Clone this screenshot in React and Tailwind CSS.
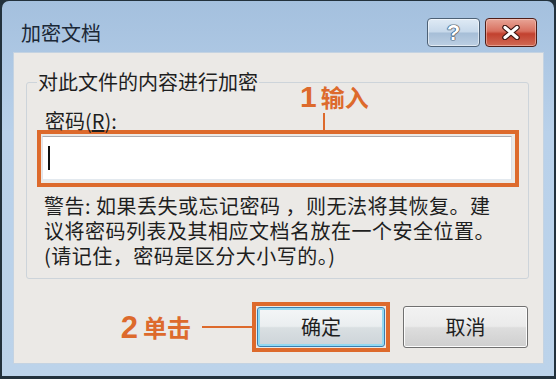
import React from 'react';

const ORANGE = '#dd6a2c';

function CaptionButtons() {
  return (
    <div className="flex items-center gap-[5px] mr-[7px]">
      {/* help */}
      <div className="w-[53px] h-[29px] rounded-[4px] border border-[#4d6176] bg-[linear-gradient(180deg,#dfeaf5_0%,#c6d8ea_48%,#a6bed7_52%,#bccfe3_100%)] shadow-[inset_0_0_0_1px_rgba(255,255,255,0.55)] flex items-center justify-center">
        <span className="text-[22px] font-bold leading-none text-white font-['Liberation_Sans',sans-serif] [text-shadow:0_0_1px_#25384c,0_0_1px_#25384c,0_0_1px_#25384c,0_0_1px_#25384c]">?</span>
      </div>
      {/* close */}
      <div className="w-[52px] h-[29px] rounded-[4px] border border-[#4f1e18] bg-[linear-gradient(180deg,#e8a597_0%,#d8705f_45%,#c2412f_55%,#d06a55_100%)] shadow-[inset_0_0_0_1px_rgba(255,220,210,0.45)] flex items-center justify-center">
        <svg width="22" height="15" viewBox="0 0 22 15">
          <path d="M5 2.5 L17 12.5 M17 2.5 L5 12.5" stroke="#3a1410" strokeWidth="5.5" strokeLinecap="round" />
          <path d="M5 2.5 L17 12.5 M17 2.5 L5 12.5" stroke="#ffffff" strokeWidth="3.2" strokeLinecap="round" />
        </svg>
      </div>
    </div>
  );
}

function WinButton({ children, focused, className = '' }) {
  return (
    <div
      className={`rounded-[3px] border flex items-center justify-center text-[20px] text-[#1e1e1e] ${
        focused
          ? 'border-[#3b7eb0] bg-[linear-gradient(180deg,#f4f6f7_0%,#eaeef0_48%,#d9dfe2_52%,#cdd4d8_100%)] shadow-[inset_0_0_0_2px_#93d9f1]'
          : 'border-[#707070] bg-[linear-gradient(180deg,#f2f2f2_0%,#ebebeb_48%,#dddddd_52%,#cfcfcf_100%)] shadow-[inset_0_0_0_1px_#fcfcfc]'
      } ${className}`}
    >
      {children}
    </div>
  );
}

export default function App() {
  return (
    <div className="w-[556px] h-[379px] bg-[#22313c] pt-[1px] px-[2px] pb-[3px] font-['Noto_Sans_CJK_SC','Noto_Sans',sans-serif]">
      <div className="h-full rounded-t-[7px] bg-[linear-gradient(180deg,#a4c0de_0%,#b9d1ea_35%,#bcd3ea_100%)] pl-[11px] pr-[10px] pb-[12px] flex flex-col">
        {/* title bar */}
        <div className="h-[51px] pt-[12px] flex items-center justify-between">
          <span className="pl-[8px] text-[20px] text-[#1b2836]">加密文档</span>
          <CaptionButtons />
        </div>

        {/* client area */}
        <div className="flex-1 bg-[#ebe9e6] border border-[#c4d3e2] flex flex-col">
          <fieldset className="mt-[17px] ml-[12px] mr-[14px] border border-[#cdd4da] rounded-[3px] pl-[10px] pr-[9px] pb-[10px]">
            <legend className="px-[1px] text-[20px] leading-[24px] text-[#1e1e1e]">对此文件的内容进行加密</legend>

            <div className="relative mt-[16px] h-[20px]">
              <span className="pl-[8px] text-[20px] leading-[20px] text-[#1e1e1e]">
                密码(<span className="underline">R</span>):
              </span>
              {/* annotation 1 */}
              <div className="absolute left-[263px] bottom-0 flex flex-col items-start">
                <div className="flex items-end font-bold" style={{ color: ORANGE }}>
                  <span className="text-[30px] leading-[26px] font-['Liberation_Sans',sans-serif]">1</span>
                  <span className="ml-[4px] text-[24px] leading-[26px]">输入</span>
                </div>
                <div className="ml-[23px] mt-[3px] w-[2px] h-[17px] bg-[#dd6a2c]" />
              </div>
            </div>

            <div className="h-[57px] border-4 border-[#dd6a2c] pl-[1px] pt-[2px] pr-[3px] pb-[3px] flex">
              <div className="flex-1 bg-white border border-[#abadb3] border-l-[#e2e3ea] border-b-[#e3e9ef] border-r-[#dbdfe6] flex items-center pl-[5px]">
                <div className="w-[2px] h-[24px] bg-[#111]" />
              </div>
            </div>

            <div className="mt-[6px] pl-[7px] text-[20px] leading-[25px] text-[#1e1e1e] whitespace-nowrap tracking-[0.5px]">
              <div>警告: 如果丢失或忘记密码 ，则无法将其恢复。建</div>
              <div>议将密码列表及其相应文档名放在一个安全位置。</div>
              <div>(请记住，密码是区分大小写的。)</div>
            </div>
          </fieldset>

          {/* buttons row */}
          <div className="mt-[23px] pr-[15px] flex items-center justify-end">
            <div className="flex items-center font-bold" style={{ color: ORANGE }}>
              <span className="text-[31px] leading-none font-['Liberation_Sans',sans-serif]">2</span>
              <span className="ml-[5px] text-[24px] leading-none">单击</span>
            </div>
            <div className="ml-[11px] w-[50px] h-[2px] bg-[#dd6a2c]" />
            <div className="border-4 border-[#dd6a2c] p-[1px]">
              <WinButton focused className="w-[128px] h-[40px]">确定</WinButton>
            </div>
            <WinButton className="ml-[13px] w-[125px] h-[42px]">取消</WinButton>
          </div>
        </div>
      </div>
    </div>
  );
}
